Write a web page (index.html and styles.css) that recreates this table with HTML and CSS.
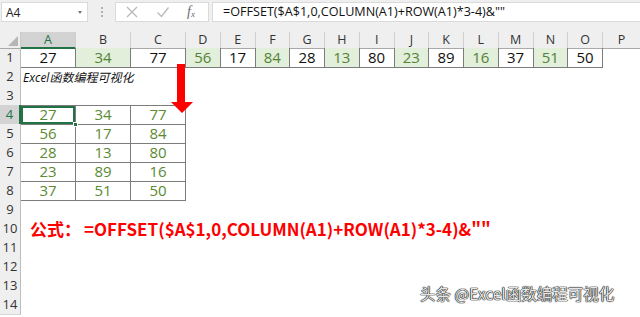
FILE: index.html
```html
<!DOCTYPE html>
<html lang="zh">
<head>
<meta charset="utf-8">
<link rel="stylesheet" href="styles.css">
</head>
<body>
<div class="app">
  <div class="toolbar">
    <div class="namebox"><span class="nb-text">A4</span><span class="dd"></span></div>
    <div class="grip"><i></i><i></i><i></i></div>
    <div class="fbtns">
      <svg class="ico" width="14" height="14" viewBox="0 0 14 14"><path d="M2 2 L12 12 M12 2 L2 12" stroke="#b9b9b9" stroke-width="1.3" fill="none"/></svg>
      <svg class="ico" width="14" height="14" viewBox="0 0 14 14"><path d="M1.5 7.5 L5.5 11.5 L12.5 2.5" stroke="#b9b9b9" stroke-width="1.3" fill="none"/></svg>
      <span class="fx">f<sub>x</sub></span>
    </div>
    <div class="finput">=OFFSET($A$1,0,COLUMN(A1)+ROW(A1)*3-4)&amp;""</div>
  </div>

  <div class="sheet">
    <div class="row hdr">
      <div class="corner"><span class="tri"></span></div>
      <div class="ch selc">A</div><div class="ch">B</div><div class="ch">C</div><div class="ch">D</div>
      <div class="ch">E</div><div class="ch">F</div><div class="ch">G</div><div class="ch">H</div>
      <div class="ch">I</div><div class="ch">J</div><div class="ch">K</div><div class="ch">L</div>
      <div class="ch">M</div><div class="ch">N</div><div class="ch">O</div><div class="ch last">P</div>
    </div>

    <div class="row">
      <div class="rh">1</div>
      <div class="c b">27</div><div class="c b g">34</div><div class="c b">77</div><div class="c b g">56</div>
      <div class="c b">17</div><div class="c b g">84</div><div class="c b">28</div><div class="c b g">13</div>
      <div class="c b">80</div><div class="c b g">23</div><div class="c b">89</div><div class="c b g">16</div>
      <div class="c b">37</div><div class="c b g">51</div><div class="c b">50</div><div class="c"></div>
    </div>

    <div class="row">
      <div class="rh">2</div>
      <div class="c lt"><span class="brand">Excel函数编程可视化</span></div>
    </div>

    <div class="row"><div class="rh">3</div></div>

    <div class="row">
      <div class="rh selr">4</div>
      <div class="c b t gt sel">27<span class="handle"></span></div><div class="c b t gt">34</div><div class="c b t gt">77</div>
    </div>
    <div class="row">
      <div class="rh">5</div>
      <div class="c b gt">56</div><div class="c b gt">17</div><div class="c b gt">84</div>
    </div>
    <div class="row">
      <div class="rh">6</div>
      <div class="c b gt">28</div><div class="c b gt">13</div><div class="c b gt">80</div>
    </div>
    <div class="row">
      <div class="rh">7</div>
      <div class="c b gt">23</div><div class="c b gt">89</div><div class="c b gt">16</div>
    </div>
    <div class="row">
      <div class="rh">8</div>
      <div class="c b gt">37</div><div class="c b gt">51</div><div class="c b gt">50</div>
    </div>
    <div class="row"><div class="rh">9</div></div>
    <div class="row">
      <div class="rh">10</div>
      <div class="c lt"><span class="formula"><span class="cn">公式：</span>=OFFSET($A$1,0,COLUMN(A1)+ROW(A1)*3-4)&amp;""</span></div>
    </div>
    <div class="row"><div class="rh">11</div></div>
    <div class="row"><div class="rh">12</div></div>
    <div class="row"><div class="rh">13</div></div>
    <div class="row"><div class="rh">14</div></div>

    <svg class="arrow" width="23" height="49" viewBox="0 0 23 49"><polygon points="6,0 14,0 14,38 22,38 11,49 0,38 6,38" fill="#ff0000"/></svg>
  </div>

  <div class="watermark">头条 @Excel函数编程可视化</div>
</div>
</body>
</html>
```

FILE: styles.css
```css
* { box-sizing: border-box; }
html, body { margin: 0; padding: 0; background: #fff; }
body { width: 640px; height: 317px; overflow: hidden; font-family: "Open Sans", "Noto Sans CJK SC", sans-serif; }
.app { position: relative; width: 640px; height: 317px; overflow: hidden; }

.toolbar {
  height: 32px;
  background: #efefef;
  display: flex;
  align-items: flex-start;
  padding-top: 2px;
  padding-left: 1px;
}
.namebox {
  width: 87px; height: 20px;
  background: #fff;
  border: 1px solid #dadada;
  display: flex; align-items: center; justify-content: space-between;
  padding: 0 5px 0 4px;
  font-size: 12px; color: #222;
}
.dd { width: 0; height: 0; border-left: 2.5px solid transparent; border-right: 2.5px solid transparent; border-top: 3px solid #777; }
.grip { width: 27px; height: 20px; display: flex; flex-direction: column; align-items: center; justify-content: center; gap: 2px; }
.grip i { display: block; width: 2px; height: 2px; background: #b0b0b0; }
.fbtns {
  width: 94px; height: 20px;
  background: #fff;
  border: 1px solid #dadada;
  display: flex; align-items: center;
  padding-left: 9px;
  gap: 17px;
}
.fx { font-family: "Liberation Serif", serif; font-style: italic; font-size: 14px; color: #6a6a6a; line-height: 1; margin-left: 0; }
.fx sub { font-size: 9px; vertical-align: -1px; }
.finput {
  flex: 1; height: 20px;
  margin-left: 3px;
  background: #fff;
  border: 1px solid #dadada;
  border-right: none;
  padding-left: 10px;
  font-size: 12.6px; line-height: 18px; color: #111;
  white-space: nowrap;
}

.sheet { position: relative; }
.row {
  display: grid;
  grid-template-columns: 21px 55px 55px 55px repeat(12, 34.75px) 1fr;
  height: 19px;
}
.row.hdr { height: 16px; }
.corner { background: #efefef; border-right: 1px solid #c9c9c9; border-bottom: 1px solid #a9a9a9; position: relative; }
.tri { position: absolute; right: 2px; bottom: 2px; width: 0; height: 0; border-left: 10px solid transparent; border-bottom: 10px solid #b6b6b6; }
.ch {
  background: #efefef;
  border-right: 1px solid #cfcfcf;
  border-bottom: 1px solid #a9a9a9;
  font-size: 12.5px; line-height: 15px; text-align: center; color: #333;
}
.ch.last { border-right: none; }
.ch.selc { background: #d3d3d3; color: #217346; border-bottom: 2px solid #217346; }

.rh {
  grid-column: 1;
  background: #efefef;
  border-right: 1px solid #bdbdbd;
  border-bottom: 1px solid #d6d6d6;
  font-size: 13px; line-height: 19px; text-align: center; color: #333;
}
.rh.selr { background: #d3d3d3; color: #217346; border-right: 2px solid #217346; }

.c {
  font-size: 15px; line-height: 18px; text-align: center; color: #111;
  position: relative;
}
.c.b { border-right: 1px solid #7c7c7c; border-bottom: 1px solid #7c7c7c; }
.c.t { border-top: 1px solid #7c7c7c; line-height: 17px; }
.c.g { background: #e2efda; color: #548235; }
.c.gt { color: #5b8a32; }
.c.sel { box-shadow: inset 0 0 0 2px #217346; }
.handle { position: absolute; right: -3px; bottom: -3px; width: 5px; height: 5px; background: #217346; border: 1px solid #fff; z-index: 2; }
.c.lt { text-align: left; overflow: visible; white-space: nowrap; }
.brand { font-size: 12px; font-style: italic; color: #111; padding-left: 2px; font-family: "Open Sans", "Noto Sans CJK SC", sans-serif; }
.formula {
  display: inline-block;
  padding-left: 9px;
  font-family: "Noto Sans CJK SC", sans-serif;
  font-weight: 700; font-size: 17px; line-height: 19px; color: #ff0000;
}
.formula .cn { margin-right: 3px; }

.arrow { position: absolute; left: 171px; top: 32px; }

.watermark {
  position: absolute; left: 420px; top: 283px;
  font-family: "Noto Sans CJK SC", sans-serif;
  font-size: 15.5px; line-height: 20px;
  color: #e6e6e6;
  text-shadow: 0 0 1px #000, 0 0 1px #000, 0 0 1px #000;
  white-space: nowrap;
}
```
